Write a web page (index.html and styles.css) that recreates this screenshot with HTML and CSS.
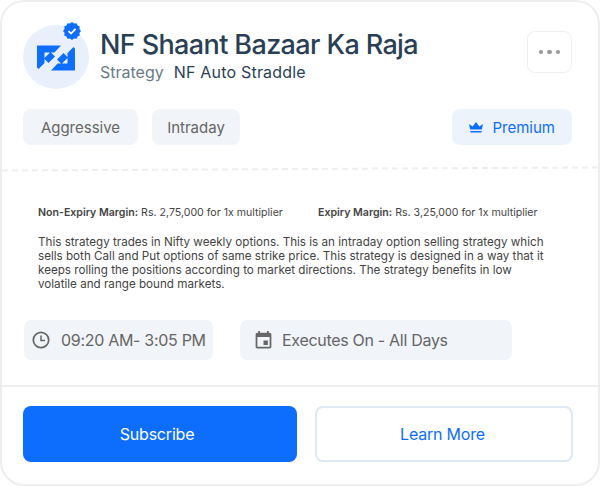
FILE: index.html
```html
<!DOCTYPE html>
<html lang="en">
<head>
<meta charset="UTF-8" />
<meta name="viewport" content="width=device-width, initial-scale=1" />
<title>NF Shaant Bazaar Ka Raja</title>
<link rel="stylesheet" href="styles.css">
</head>
<body>
<main class="card">
  <section class="top">
    <header class="head">
      <div class="avatar">
        <svg class="logo" width="38" height="26" viewBox="0 0 38 26" aria-hidden="true">
          <path fill="#0d6efd" fill-rule="evenodd" d="M0 .5H24L17.500 7.500H14L18 11.500 11.500 18 7.500 14V18L1.500 24 0 22.500ZM7.500 7.500H13L7.500 13Z" />
          <path fill="#0d6efd" fill-rule="evenodd" transform="rotate(180 19 13)" d="M0 .5H24L17.500 7.500H14L18 11.500 11.500 18 7.500 14V18L1.500 24 0 22.500ZM7.500 7.500H13L7.500 13Z" />
        </svg>
        <svg class="badge" width="18" height="18" viewBox="0 0 18 18" aria-hidden="true">
          <path fill="#0d6efd" d="M9 0 11 1.600 13.500 1.200 14.600 3.400 16.800 4.500 16.400 7 18 9 16.400 11 16.800 13.500 14.600 14.600 13.500 16.800 11 16.400 9 18 7 16.400 4.500 16.800 3.400 14.600 1.200 13.500 1.600 11 0 9 1.600 7 1.200 4.500 3.400 3.400 4.500 1.200 7 1.600Z" />
          <path fill="none" stroke="#fff" stroke-width="1.700" d="M5.500 9.200 8 11.600 12.600 6.800" />
        </svg>
      </div>
      <div class="head-text">
        <h1>NF Shaant Bazaar Ka Raja</h1>
        <p class="sub"><span>Strategy</span> <b>NF Auto Straddle</b></p>
      </div>
      <button class="more" type="button" aria-label="More options"><i></i><i></i><i></i></button>
    </header>
    <div class="tags">
      <span class="tag tag-wide">Aggressive</span>
      <span class="tag tag-narrow">Intraday</span>
      <span class="tag premium">
        <svg width="14" height="11" viewBox="0 0 14 11" aria-hidden="true">
          <path fill="#0d6efd" d="M0 2 3.600 4.400 7 0 10.400 4.400 14 2 12.800 7.600H1.200ZM1.400 9H12.600V10.600H1.400Z" />
        </svg>
        Premium
      </span>
    </div>
  </section>
  <div class="dashed"></div>
  <section class="info">
    <div class="margins">
      <p><b>Non-Expiry Margin:</b> Rs. 2,75,000 for 1x multiplier</p>
      <p><b>Expiry Margin:</b> Rs. 3,25,000 for 1x multiplier</p>
    </div>
    <p class="desc">This strategy trades in Nifty weekly options. This is an intraday option selling strategy which sells both Call and Put options of same strike price. This strategy is designed in a way that it keeps rolling the positions according to market directions. The strategy benefits in low volatile and range bound markets.</p>
  </section>
  <section class="times">
    <div class="pill pill-time">
      <svg width="18" height="18" viewBox="0 0 18 18" aria-hidden="true">
        <circle cx="9" cy="9" r="7.700" fill="none" stroke="#666" stroke-width="1.700" />
        <path fill="none" stroke="#666" stroke-width="1.500" d="M9 4.600V9.400H13" />
      </svg>
      09:20 AM- 3:05 PM
    </div>
    <div class="pill pill-days">
      <svg width="21" height="21" viewBox="0 0 24 24" aria-hidden="true">
        <path fill="#666" d="M17 12h-5v5h5v-5zM16 1v2H8V1H6v2H5c-1.110 0-1.990.9-1.990 2L3 19c0 1.100.89 2 2 2h14c1.100 0 2-.9 2-2V5c0-1.100-.9-2-2-2h-1V1h-2zm3 18H5V8h14v11z" />
      </svg>
      Executes On - All Days
    </div>
  </section>
  <footer class="actions">
    <button class="btn btn-primary" type="button">Subscribe</button>
    <button class="btn btn-outline" type="button">Learn More</button>
  </footer>
</main>
</body>
</html>
```

FILE: styles.css
```css
* {
  box-sizing: border-box;
}
html, body {
  margin: 0;
  padding: 0;
  height: 100%;
  background: #fff;
}
body {
  font-family: "Inter", "Liberation Sans", sans-serif;
  overflow: hidden;
}

/* Card */
.card {
  width: 600px;
  height: 486px;
  border: 2px solid #eeeeee;
  border-radius: 24px;
  display: flex;
  flex-direction: column;
  background: #fff;
}

/* Header block */
.top {
  padding: 23px 26px 0 21px;
}
.head {
  display: flex;
  align-items: flex-start;
}
.avatar {
  width: 66px;
  height: 64px;
  border-radius: 50%;
  background: #e9f0fb;
  position: relative;
  flex-shrink: 0;
  display: flex;
  align-items: center;
  justify-content: center;
}
.logo {
  margin-top: 2px;
}
.badge {
  position: absolute;
  top: -3px;
  right: 8px;
}
.head-text {
  flex: 1;
  margin-left: 11px;
  padding-top: 3px;
}
h1 {
  margin: 0;
  font-size: 27px;
  line-height: 34px;
  font-weight: 500;
  color: #2a3f55;
  letter-spacing: -0.62px;
}
.sub {
  margin: 0;
  font-size: 16px;
  line-height: 20px;
  color: #6b7a89;
  display: flex;
  gap: 10px;
}
.sub b {
  font-weight: 400;
  color: #2a3f55;
  letter-spacing: 0.2px;
}
.more {
  width: 45px;
  height: 42px;
  margin-top: 6px;
  background: #fff;
  border: 1px solid #f0f0f0;
  border-radius: 8px;
  display: flex;
  align-items: center;
  justify-content: center;
  gap: 4px;
  padding: 0;
}
.more i {
  width: 4.500px;
  height: 4.500px;
  border-radius: 50%;
  background: #999;
}

/* Tags */
.tags {
  display: flex;
  gap: 14px;
  margin-top: 20px;
}
.tag {
  height: 36px;
  padding: 0 16px;
  display: flex;
  align-items: center;
  justify-content: center;
  gap: 9px;
  background: #f1f4f8;
  border-radius: 8px;
  font-size: 15px;
  color: #666;
}
.tag-wide {
  width: 115px;
}
.tag-narrow {
  width: 88px;
  padding: 0;
}
.premium {
  margin-left: auto;
  padding: 0 17px;
  background: #edf3fb;
  color: #0d6efd;
}

/* Slightly skewed dashed rule, as in the design */
.dashed {
  margin-top: 23px;
  height: 0;
  border-top: 2px dashed #eeeeee;
  transform: rotate(-0.3deg);
}

/* Margins and description */
.info {
  padding: 36px 48px 0 36px;
  color: #444;
}
.margins {
  display: flex;
  font-size: 10.600px;
  line-height: 14px;
}
.margins p {
  margin: 0;
  flex: none;
  width: 280px;
}
.margins b {
  font-weight: 600;
}
.desc {
  margin: 15px 0 0;
  font-size: 11.650px;
  line-height: 14px;
}

/* Time pills */
.times {
  display: flex;
  gap: 27px;
  padding: 0 0 0 22px;
  margin-top: 29px;
}
.pill {
  height: 40px;
  display: flex;
  align-items: center;
  background: #f1f4f8;
  border-radius: 7px;
  font-size: 16px;
  letter-spacing: -0.3px;
  color: #666;
}
.pill-time {
  width: 189px;
  padding-left: 8px;
  gap: 11px;
}
.pill-days {
  width: 272px;
  padding-left: 13px;
  gap: 8px;
}

/* Action buttons */
.actions {
  margin-top: 25px;
  border-top: 2px solid #eeeeee;
  padding: 19px 25px 0 21px;
  display: flex;
  gap: 18px;
}
.btn {
  height: 56px;
  border-radius: 8px;
  font-family: inherit;
  font-size: 16px;
  font-weight: 400;
  letter-spacing: -0.2px;
}
.btn-primary {
  flex: none;
  width: 274px;
  padding: 0 6px 0 0;
  background: #0d6efd;
  border: 0;
  color: #fff;
}
.btn-outline {
  flex: 1;
  padding: 0 3px 0 0;
  background: #fff;
  border: 2px solid #dfe8f5;
  color: #0d6efd;
}
```
